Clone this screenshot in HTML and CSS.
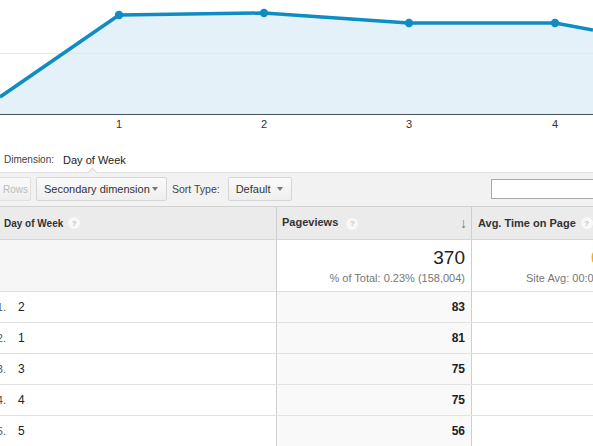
FILE: index.html
```html
<!DOCTYPE html>
<html>
<head>
<meta charset="utf-8">
<link rel="stylesheet" href="styles.css">
</head>
<body>
<div class="page">
  <svg class="chart" width="593" height="132" viewBox="0 0 593 132">
    <line x1="0" y1="53.5" x2="593" y2="53.5" stroke="#e6e6e6" stroke-width="1"/>
    <path d="M0 97 L119 15 L264 13 L409 23 L555 23 L593 30 L593 114 L0 114 Z" fill="#e5f1f8"/>
    <line x1="0" y1="53.5" x2="593" y2="53.5" stroke="#dfe8ed" stroke-width="1"/>
    <path d="M0 97 L119 15 L264 13 L409 23 L555 23 L593 30" fill="none" stroke="#0f8cc3" stroke-width="3.5" stroke-linejoin="round"/>
    <circle cx="119" cy="15" r="4.2" fill="#0f8cc3"/>
    <circle cx="264" cy="13" r="4.2" fill="#0f8cc3"/>
    <circle cx="409" cy="23" r="4.2" fill="#0f8cc3"/>
    <circle cx="555" cy="23" r="4.2" fill="#0f8cc3"/>
    <line x1="0" y1="114.5" x2="593" y2="114.5" stroke="#4a535a" stroke-width="1"/>
    <g class="ticks">
      <text x="119" y="128" text-anchor="middle">1</text>
      <text x="264" y="128" text-anchor="middle">2</text>
      <text x="409" y="128" text-anchor="middle">3</text>
      <text x="555" y="128" text-anchor="middle">4</text>
    </g>
  </svg>

  <div class="dim">
    <span class="dim-label">Dimension:</span>
    <span class="dim-value">Day of Week</span>
  </div>

  <div class="toolbar">
    <span class="btn btn-rows">Rows</span>
    <span class="btn btn-sec">Secondary dimension <span class="caret"></span></span>
    <span class="sort-label">Sort Type:</span>
    <span class="btn btn-default">Default <span class="caret"></span></span>
    <span class="spacer"></span>
    <span class="search"></span>
  </div>

  <div class="table">
    <div class="row head">
      <div class="c c1"><span class="h1text">Day of Week</span> <span class="help">?</span></div>
      <div class="c c2"><span>Pageviews <span class="help">?</span></span><span class="arrow">&#8595;</span></div>
      <div class="c c3">Avg. Time on Page <span class="help">?</span></div>
    </div>
    <div class="row summary">
      <div class="c c1"></div>
      <div class="c c2">
        <div class="big">370</div>
        <div class="sub">% of Total: 0.23% (158,004)</div>
      </div>
      <div class="c c3">
        <div class="big orange">0</div>
        <div class="sub">Site Avg: 00:00:53 (-2.41%)</div>
      </div>
    </div>
    <div class="row data">
      <div class="c c1"><span class="idx">1.</span><span class="val">2</span></div>
      <div class="c c2">83</div>
      <div class="c c3"></div>
    </div>
    <div class="row data">
      <div class="c c1"><span class="idx">2.</span><span class="val">1</span></div>
      <div class="c c2">81</div>
      <div class="c c3"></div>
    </div>
    <div class="row data">
      <div class="c c1"><span class="idx">3.</span><span class="val">3</span></div>
      <div class="c c2">75</div>
      <div class="c c3"></div>
    </div>
    <div class="row data">
      <div class="c c1"><span class="idx">4.</span><span class="val">4</span></div>
      <div class="c c2">75</div>
      <div class="c c3"></div>
    </div>
    <div class="row data">
      <div class="c c1"><span class="idx">5.</span><span class="val">5</span></div>
      <div class="c c2">56</div>
      <div class="c c3"></div>
    </div>
  </div>
</div>
</body>
</html>
```

FILE: styles.css
```css
html, body {
  margin: 0;
  padding: 0;
  background: #fff;
}
body {
  width: 593px;
  height: 446px;
  overflow: hidden;
  font-family: "Liberation Sans", Arial, sans-serif;
  color: #222;
}
.page {
  width: 593px;
}
.chart {
  display: block;
}
.ticks text {
  font-family: "Liberation Sans", Arial, sans-serif;
  font-size: 11px;
  fill: #333;
}

.dim {
  height: 40px;
  box-sizing: border-box;
  display: flex;
  align-items: flex-end;
  padding: 0 0 4px 4px;
  font-size: 11px;
  line-height: 16px;
  color: #333;
  position: relative;
}
.dim-label {
  font-size: 10px;
  color: #444;
}
.dim-value {
  margin-left: 9px;
  color: #222;
}
.dim::after {
  content: "";
  position: absolute;
  left: 89px;
  bottom: -4px;
  width: 6px;
  height: 6px;
  background: #f2f2f2;
  border-left: 1px solid #dcdcdc;
  border-top: 1px solid #dcdcdc;
  transform: rotate(45deg);
}

.toolbar {
  height: 34px;
  box-sizing: border-box;
  border-top: 1px solid #e1e1e1;
  background: #f2f2f2;
  display: flex;
  align-items: flex-start;
  padding-top: 4px;
  font-size: 11px;
}
.btn {
  height: 24px;
  box-sizing: border-box;
  border: 1px solid #d6d6d6;
  border-radius: 2px;
  background: linear-gradient(#fafafa, #efefef);
  display: flex;
  align-items: center;
  color: #333;
  font-size: 11px;
}
.btn-rows {
  margin-left: -10px;
  width: 41px;
  padding-left: 12px;
  font-size: 10px;
  color: #bbb;
  border-color: #e0e0e0;
}
.btn-sec {
  margin-left: 5px;
  width: 131px;
  padding-left: 7px;
}
.btn-default {
  margin-left: 8px;
  width: 64px;
  padding-left: 7px;
}
.caret {
  width: 0;
  height: 0;
  border-left: 3px solid transparent;
  border-right: 3px solid transparent;
  border-top: 4px solid #777;
  margin-left: auto;
  margin-right: 8px;
}
.sort-label {
  margin-left: 5px;
  height: 24px;
  line-height: 24px;
  font-size: 10.5px;
  color: #444;
}
.spacer {
  flex: 1;
}
.search {
  margin-top: 2px;
  width: 110px;
  height: 20px;
  box-sizing: border-box;
  border: 1px solid #a9a9a9;
  background: #fff;
  margin-right: -8px;
  flex-shrink: 0;
}

.table {
  width: 700px;
}
.row {
  display: grid;
  grid-template-columns: 277px 195px 1fr;
}
.c {
  box-sizing: border-box;
}
.c1 {
  border-right: 1px solid #cfcfcf;
}
.c2 {
  border-right: 1px solid #cfcfcf;
}
.head {
  height: 34px;
  background: #ebebeb;
  border-top: 1px solid #d2d2d2;
  border-bottom: 1px solid #d6d6d6;
  box-sizing: border-box;
  font-size: 11px;
  font-weight: bold;
  color: #333;
}
.head .c {
  display: flex;
  align-items: center;
  padding-left: 5px;
}
.h1text {
  font-size: 10px;
}
.head .c1 {
  padding-left: 4px;
}
.head .c2 {
  justify-content: space-between;
  padding-right: 4px;
}
.head .c3 {
  padding-left: 6px;
}
.help {
  display: inline-flex;
  align-items: center;
  justify-content: center;
  width: 12px;
  height: 12px;
  border-radius: 50%;
  background: #f8f8f8;
  color: #c4c4c4;
  font-size: 8px;
  font-weight: bold;
  margin-left: 5px;
  vertical-align: middle;
}
.arrow {
  color: #777;
  font-size: 14px;
  font-weight: bold;
}

.summary {
  height: 52px;
  border-bottom: 1px solid #dedede;
  box-sizing: border-box;
}
.summary .c1 {
  background: #f6f6f6;
}
.summary .c2 {
  text-align: right;
  padding: 7px 6px 0 0;
}
.big {
  font-size: 19px;
  line-height: 22px;
  color: #222;
}
.sub {
  font-size: 11px;
  line-height: 14px;
  color: #777;
  margin-top: 2px;
}
.summary .c3 {
  padding: 7px 0 0 54px;
  white-space: nowrap;
}
.orange {
  color: #f5a623;
  padding-left: 65px;
}

.data {
  height: 31px;
  border-bottom: 1px solid #e2e2e2;
  box-sizing: border-box;
  font-size: 12px;
}
.data .c {
  display: flex;
  align-items: center;
}
.data .c2 {
  background: #f9f9f9;
  justify-content: flex-end;
  padding-right: 6px;
  font-weight: bold;
  color: #222;
}
.idx {
  width: 14px;
  margin-left: -8px;
  text-align: right;
  color: #555;
  font-size: 11px;
}
.val {
  margin-left: 12px;
  color: #222;
}
```
